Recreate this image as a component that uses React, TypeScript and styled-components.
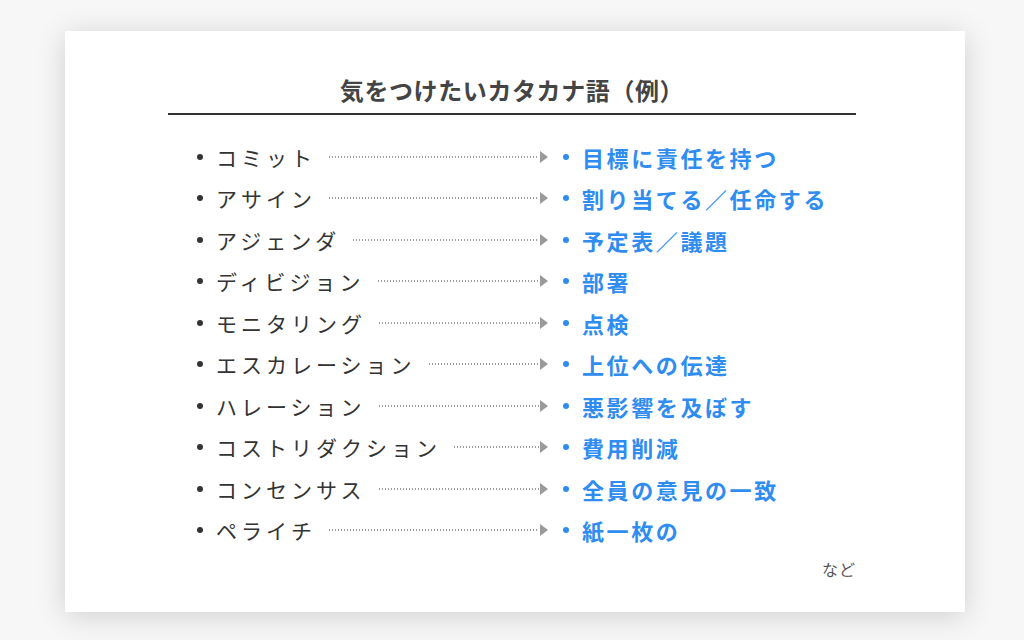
import React from 'react';
import styled, { createGlobalStyle } from 'styled-components';

const GlobalStyle = createGlobalStyle`
  html, body {
    margin: 0;
    padding: 0;
    background: #ffffff;
  }
  body {
    font-family: "Noto Sans CJK JP", "Noto Sans", sans-serif;
  }
`;

const Page = styled.div`
  width: 1024px;
  height: 640px;
  padding: 31px 0 0 65px;
  box-sizing: border-box;
  background: #f7f7f7;
  overflow: hidden;
`;

const Card = styled.div`
  width: 900px;
  height: 581px;
  background: #ffffff;
  box-shadow: 0 4px 28px rgba(0, 0, 0, 0.16);
  padding: 43px 0 0 103px;
  box-sizing: border-box;
`;

const Inner = styled.div`
  width: 688px;
  display: flex;
  flex-direction: column;
`;

const Title = styled.h1`
  margin: 0;
  padding-bottom: 7px;
  border-bottom: 2px solid #333333;
  text-align: center;
  font-size: 24px;
  line-height: 32px;
  font-weight: 700;
  letter-spacing: 0.6px;
  color: #444444;
`;

const List = styled.ul`
  list-style: none;
  margin: 21px 0 0;
  padding: 0 0 0 29px;
  display: flex;
  flex-direction: column;
`;

const Row = styled.li`
  height: 41.5px;
  display: grid;
  grid-template-columns: 351px 1fr;
  column-gap: 12px;
  align-items: center;
`;

const Term = styled.div`
  display: flex;
  align-items: center;
`;

const Dot = styled.span<{ color: string }>`
  width: 6px;
  height: 6px;
  border-radius: 50%;
  background: ${p => p.color};
  flex: none;
  margin-right: 13px;
`;

const TermText = styled.span`
  font-size: 21px;
  line-height: 28px;
  letter-spacing: 4px;
  color: #333333;
  white-space: nowrap;
`;

const Leader = styled.span`
  flex: 1;
  display: flex;
  align-items: center;
  margin-left: 13px;
`;

const Dots = styled.span`
  flex: 1;
  height: 2px;
  background-image: linear-gradient(to right, #9c9c9c 50%, transparent 0);
  background-size: 3px 2px;
  background-repeat: repeat-x;
`;

const Arrow = styled.span`
  width: 0;
  height: 0;
  border-left: 8px solid #9a9a9a;
  border-top: 6px solid transparent;
  border-bottom: 6px solid transparent;
  margin-left: 1px;
`;

const Meaning = styled.div`
  display: flex;
  align-items: center;
  padding-left: 3px;
`;

const MeaningText = styled.span`
  font-size: 22px;
  line-height: 28px;
  font-weight: 700;
  letter-spacing: 2.6px;
  color: #2f8cf0;
  white-space: nowrap;
`;

const Note = styled.div`
  margin-top: 7px;
  text-align: right;
  font-size: 16px;
  line-height: 22px;
  letter-spacing: 1px;
  color: #555555;
`;

const words = [
  { term: 'コミット', meaning: '目標に責任を持つ' },
  { term: 'アサイン', meaning: '割り当てる／任命する' },
  { term: 'アジェンダ', meaning: '予定表／議題' },
  { term: 'ディビジョン', meaning: '部署' },
  { term: 'モニタリング', meaning: '点検' },
  { term: 'エスカレーション', meaning: '上位への伝達' },
  { term: 'ハレーション', meaning: '悪影響を及ぼす' },
  { term: 'コストリダクション', meaning: '費用削減' },
  { term: 'コンセンサス', meaning: '全員の意見の一致' },
  { term: 'ペライチ', meaning: '紙一枚の' },
];

const App: React.FC = () => {
  return (
    <Page>
      <GlobalStyle />
      <Card>
        <Inner>
          <Title>気をつけたいカタカナ語（例）</Title>
          <List>
            {words.map(w => (
              <Row key={w.term}>
                <Term>
                  <Dot color="#333333" />
                  <TermText>{w.term}</TermText>
                  <Leader>
                    <Dots />
                    <Arrow />
                  </Leader>
                </Term>
                <Meaning>
                  <Dot color="#2f8cf0" />
                  <MeaningText>{w.meaning}</MeaningText>
                </Meaning>
              </Row>
            ))}
          </List>
          <Note>など</Note>
        </Inner>
      </Card>
    </Page>
  );
};

export default App;
